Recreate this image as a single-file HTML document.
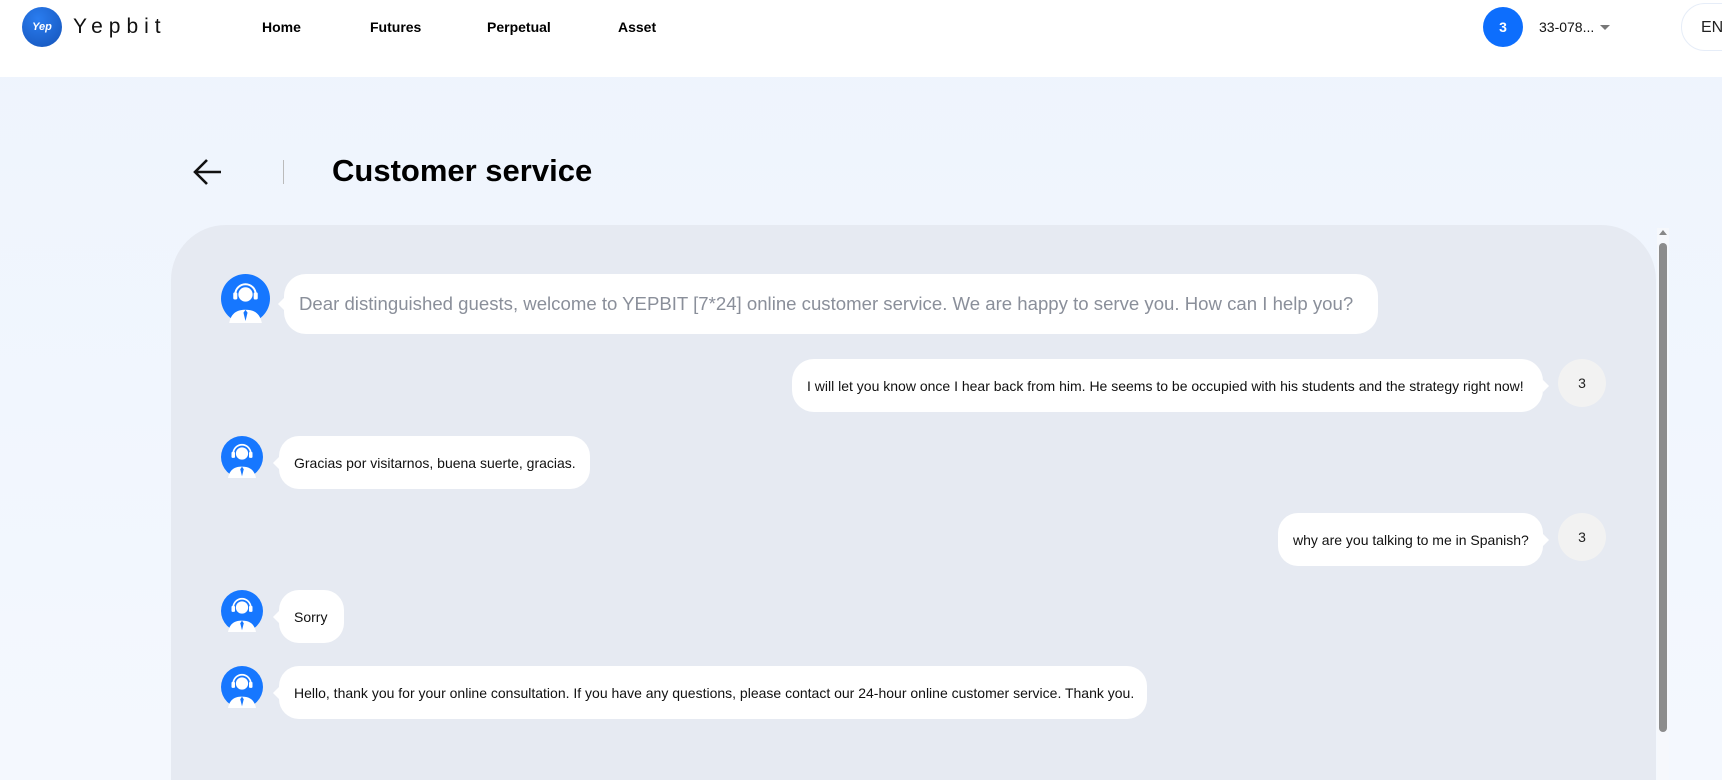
<!DOCTYPE html>
<html style="width:1722px;height:780px;overflow:hidden;background:#f4f8fe"><head><meta charset="utf-8"><style>
*{margin:0;padding:0;box-sizing:border-box}
body{width:1722px;height:780px;overflow:hidden;font-family:"Liberation Sans",Arial,sans-serif;background:linear-gradient(180deg,#eef4fd 0%,#f4f8fe 100%);position:relative;color:#111}
.hdr{position:absolute;left:0;top:0;width:1722px;height:77px;background:#fff}
.abs{position:absolute}
.nav{position:absolute;top:19px;font-size:14px;font-weight:bold;color:#000}
.panel{position:absolute;left:171px;top:225px;width:1485px;height:555px;background:#e6eaf2;border-radius:55px 55px 0 0}
.b{position:absolute;background:#fff;border-radius:18px;font-size:14px;color:#111;padding:0 15px;display:flex;align-items:center;white-space:nowrap}
.b.l::before{content:"";position:absolute;left:-6px;top:50%;margin-top:-6px;border:6px solid transparent;border-left:0;border-right-color:#fff}
.b.r::after{content:"";position:absolute;right:-6px;top:50%;margin-top:-6px;border:6px solid transparent;border-right:0;border-left-color:#fff}
.ga{position:absolute;width:48px;height:48px;border-radius:50%;background:#f2f2f2;font-size:14px;color:#222;display:flex;align-items:center;justify-content:center}
</style></head><body>
<div class="hdr">
 <div class="abs" style="left:22px;top:7px;width:40px;height:40px;border-radius:50%;background:radial-gradient(circle at 40% 30%,#2a7df0,#1553b8);color:#fff;font-size:11px;font-weight:bold;display:flex;align-items:center;justify-content:center;font-style:italic">Yep</div>
 <div class="abs" style="left:73px;top:15px;font-size:21px;letter-spacing:6px;color:#111">Yepbit</div>
 <div class="nav" style="left:262px">Home</div>
 <div class="nav" style="left:370px">Futures</div>
 <div class="nav" style="left:487px">Perpetual</div>
 <div class="nav" style="left:618px">Asset</div>
 <div class="abs" style="left:1483px;top:7px;width:40px;height:40px;border-radius:50%;background:#0d6efd;color:#fff;font-size:14px;font-weight:bold;display:flex;align-items:center;justify-content:center">3</div>
 <div class="abs" style="left:1539px;top:19px;font-size:14px">33-078...</div>
 <div class="abs" style="left:1600px;top:25px;border:5px solid transparent;border-top:5px solid #777;border-bottom:0;width:0;height:0"></div>
 <div class="abs" style="left:1681px;top:3px;width:80px;height:48px;border:1px solid #e6edf8;border-radius:24px;font-size:16px;padding:15px 0 0 19px;color:#222">EN</div>
</div>
<svg class="abs" style="left:193px;top:158px" width="30" height="28" viewBox="0 0 30 28"><path d="M28 14H3M14 2L2 14l12 12" stroke="#111" stroke-width="2.6" fill="none"/></svg>
<div class="abs" style="left:283px;top:160px;width:1px;height:24px;background:#bbb"></div>
<div class="abs" style="left:332px;top:153px;font-size:31px;font-weight:bold;color:#000">Customer service</div>
<div class="panel"></div>
<div class="abs" style="left:1657px;top:228px;width:12px;height:552px;background:#f6f8fc"></div>
<div class="abs" style="left:1659px;top:230px;border:4px solid transparent;border-bottom:5px solid #888;border-top:0"></div>
<div class="abs" style="left:1659px;top:243px;width:8px;height:489px;border-radius:4px;background:#8c8c8c"></div>

<svg width="0" height="0" style="position:absolute"><defs><g id="agent"><circle cx="24" cy="24" r="24" fill="#1677ff"/><circle cx="24" cy="20" r="7" fill="#fff"/><path d="M14 20a10 10 0 0 1 20 0" stroke="#fff" stroke-width="2" fill="none"/><rect x="12" y="18" width="4" height="7" rx="1.5" fill="#fff"/><rect x="32" y="18" width="4" height="7" rx="1.5" fill="#fff"/><path d="M8 48c2-10 8-13 16-13s14 3 16 13z" fill="#fff"/><path d="M24 35l-2 3 2 8 2-8z" fill="#1677ff"/></g></defs></svg>

<svg class="abs" style="left:221px;top:274px" width="49" height="49" viewBox="0 0 48 48"><use href="#agent"/></svg>
<div class="b l" style="left:284px;top:274px;width:1094px;height:60px;font-size:18.6px;color:#8a8f9a;border-radius:22px">Dear distinguished guests, welcome to YEPBIT [7*24] online customer service. We are happy to serve you. How can I help you?</div>

<div class="b r" style="left:792px;top:359px;width:751px;height:53px;border-radius:22px">I will let you know once I hear back from him. He seems to be occupied with his students and the strategy right now!</div>
<div class="ga" style="left:1558px;top:359px">3</div>

<svg class="abs" style="left:221px;top:436px" width="42" height="42" viewBox="0 0 48 48"><use href="#agent"/></svg>
<div class="b l" style="left:279px;top:436px;width:311px;height:53px;border-radius:20px">Gracias por visitarnos, buena suerte, gracias.</div>

<div class="b r" style="left:1278px;top:513px;width:265px;height:53px;border-radius:20px">why are you talking to me in Spanish?</div>
<div class="ga" style="left:1558px;top:513px">3</div>

<svg class="abs" style="left:221px;top:590px" width="42" height="42" viewBox="0 0 48 48"><use href="#agent"/></svg>
<div class="b l" style="left:279px;top:590px;width:65px;height:53px;border-radius:20px">Sorry</div>

<svg class="abs" style="left:221px;top:666px" width="42" height="42" viewBox="0 0 48 48"><use href="#agent"/></svg>
<div class="b l" style="left:279px;top:666px;width:868px;height:53px;border-radius:20px">Hello, thank you for your online consultation. If you have any questions, please contact our 24-hour online customer service. Thank you.</div>
</body></html>
